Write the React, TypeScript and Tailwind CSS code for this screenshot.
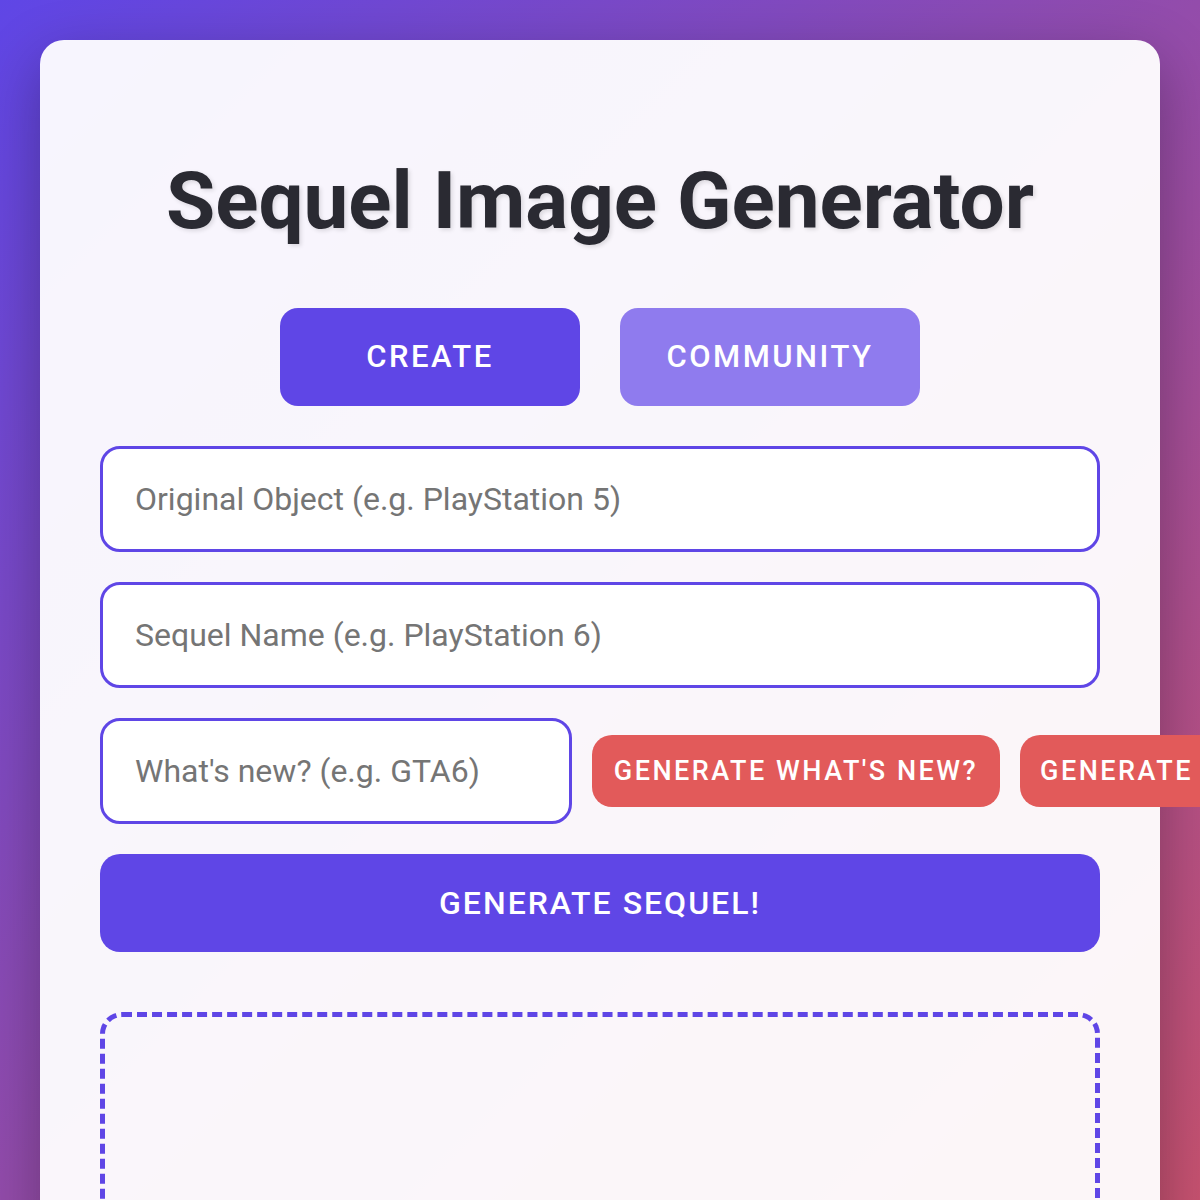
import React from "react";

export default function App() {
  return (
    <div
      className="min-h-screen w-full overflow-hidden bg-fixed bg-[linear-gradient(135deg,#5f46e6_0%,#c75270_100%)] p-[40px]"
      style={{ fontFamily: "Roboto, 'Noto Sans', sans-serif" }}
    >
      <div className="rounded-[24px] bg-white/95 px-[60px] pt-[60px] pb-[60px] shadow-[0_20px_60px_rgba(0,0,0,0.3)]">
        <h1 className="mt-[53px] text-center text-[80px] leading-[96px] font-bold text-[#2a2a32] [text-shadow:2px_2px_4px_rgba(0,0,0,0.12)]">
          Sequel Image Generator
        </h1>
        <div className="mt-[59px] flex justify-center gap-[40px]">
          <button className="h-[98px] w-[300px] rounded-[18px] bg-[#5f46e6] text-[31px] font-medium tracking-[2.5px] text-white">
            CREATE
          </button>
          <button className="h-[98px] w-[300px] rounded-[18px] bg-[#8f7bee] text-[31px] font-medium tracking-[2.5px] text-white">
            COMMUNITY
          </button>
        </div>
        <div className="mt-[40px] flex flex-col gap-[30px]">
          <input
            className="h-[106px] w-full rounded-[20px] border-[3px] border-[#5f46e6] bg-white px-[32px] text-[32px] text-[#333] outline-none placeholder:text-[#757575]"
            placeholder="Original Object (e.g. PlayStation 5)"
          />
          <input
            className="h-[106px] w-full rounded-[20px] border-[3px] border-[#5f46e6] bg-white px-[32px] text-[32px] text-[#333] outline-none placeholder:text-[#757575]"
            placeholder="Sequel Name (e.g. PlayStation 6)"
          />
          <div className="flex items-center gap-[20px]">
            <input
              className="h-[106px] w-[472px] shrink-0 rounded-[20px] border-[3px] border-[#5f46e6] bg-white px-[32px] text-[32px] text-[#333] outline-none placeholder:text-[#757575]"
              placeholder="What's new? (e.g. GTA6)"
            />
            <button className="h-[72px] w-[408px] shrink-0 rounded-[20px] bg-[#e25a5a] text-[27px] font-medium tracking-[2.5px] whitespace-nowrap text-white">
              GENERATE WHAT'S NEW?
            </button>
            <button className="h-[72px] shrink-0 rounded-[20px] bg-[#e25a5a] px-[20px] text-[27px] font-medium tracking-[2.5px] whitespace-nowrap text-white">
              GENERATE RANDOM
            </button>
          </div>
          <button className="h-[98px] w-full rounded-[20px] bg-[#5f46e6] text-[32px] font-medium tracking-[2px] text-white">
            GENERATE SEQUEL!
          </button>
        </div>
        <div className="mt-[60px] h-[400px] w-full rounded-[22px] border-[5px] border-dashed border-[#5f46e6]" />
      </div>
    </div>
  );
}
